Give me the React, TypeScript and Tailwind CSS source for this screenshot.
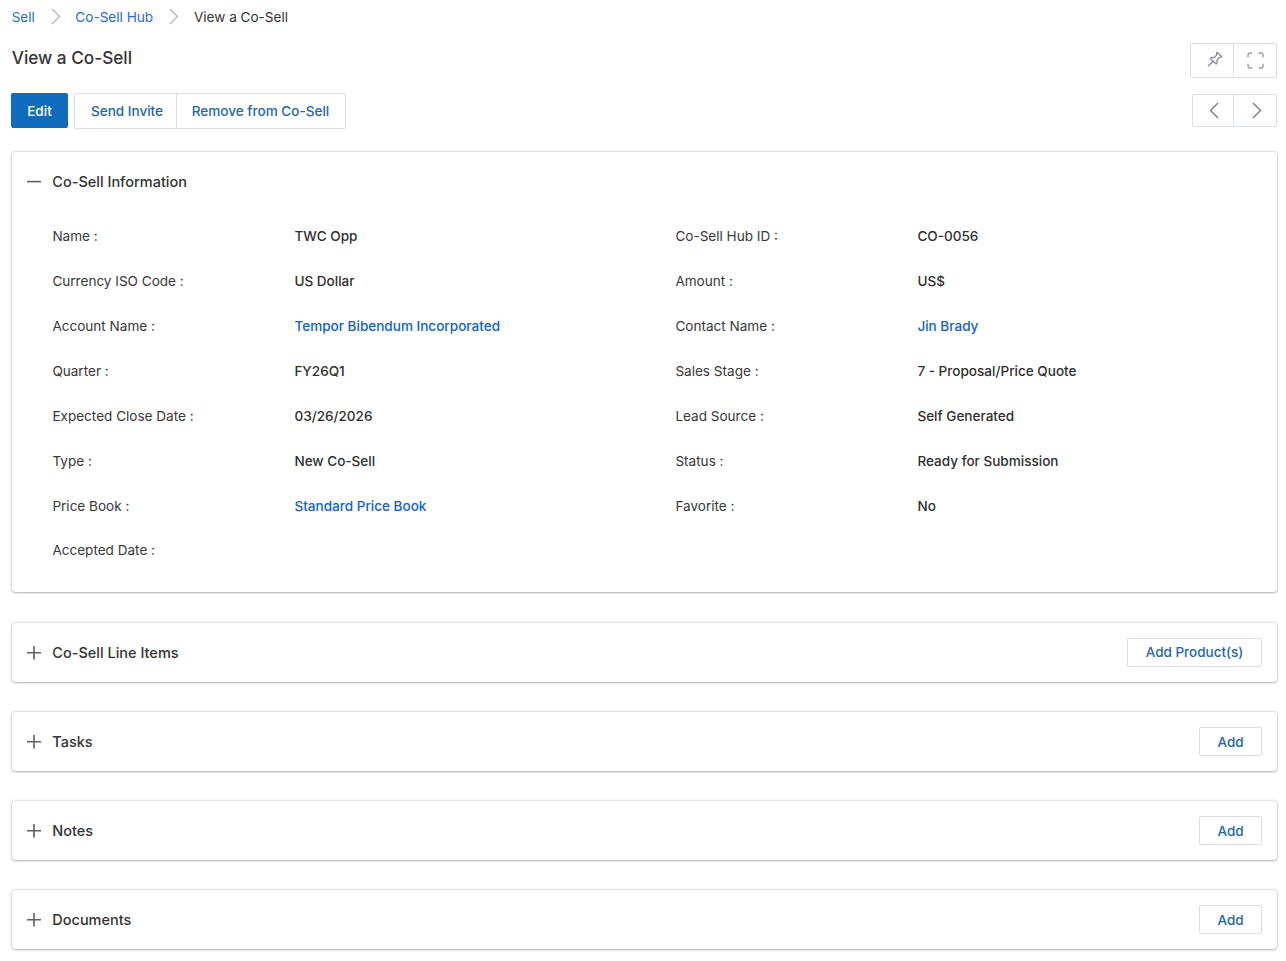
import React from "react";

type Field = { label: string; value: string; link?: boolean };

const left: Field[] = [
  { label: "Name", value: "TWC Opp" },
  { label: "Currency ISO Code", value: "US Dollar" },
  { label: "Account Name", value: "Tempor Bibendum Incorporated", link: true },
  { label: "Quarter", value: "FY26Q1" },
  { label: "Expected Close Date", value: "03/26/2026" },
  { label: "Type", value: "New Co-Sell" },
  { label: "Price Book", value: "Standard Price Book", link: true },
  { label: "Accepted Date", value: "" },
];

const right: Field[] = [
  { label: "Co-Sell Hub ID", value: "CO-0056" },
  { label: "Amount", value: "US$" },
  { label: "Contact Name", value: "Jin Brady", link: true },
  { label: "Sales Stage", value: "7 - Proposal/Price Quote" },
  { label: "Lead Source", value: "Self Generated" },
  { label: "Status", value: "Ready for Submission" },
  { label: "Favorite", value: "No" },
];

const rowHeights = ["h-[45px]", "h-[45px]", "h-[45px]", "h-[45px]", "h-[45px]", "h-[45px]", "h-[44px]", "h-[45px]"];

const sections = [
  { title: "Co-Sell Line Items", action: "Add Product(s)", margin: "mt-[31px]", button: "w-[135px] pb-[2px]" },
  { title: "Tasks", action: "Add", margin: "mt-[30px]", button: "w-[63px]" },
  { title: "Notes", action: "Add", margin: "mt-[30px]", button: "w-[63px]" },
  { title: "Documents", action: "Add", margin: "mt-[30px]", button: "w-[63px]" },
];

const card = "rounded-[4px] bg-white shadow-[0_0_2px_0.5px_rgba(0,0,0,0.13),0_1px_2px_0_rgba(40,40,80,0.24)]";

function Separator() {
  return (
    <svg width="10" height="17" viewBox="0 0 10 17" fill="none" stroke="#a9adb2" strokeWidth="1.1">
      <path d="M1 1l7.5 7.5L1 16" />
    </svg>
  );
}

function Toggle({ open }: { open?: boolean }) {
  return (
    <svg width="14" height="14" viewBox="0 0 14 14" fill="none" stroke="#606060" strokeWidth="1.6">
      <path d={open ? "M0 6.6h14" : "M0 6.8h14M7 0v13.6"} />
    </svg>
  );
}

function Fields({ items }: { items: Field[] }) {
  return (
    <dl className="w-[623px] shrink-0 text-[13.56px]">
      {items.map((f, i) => (
        <div key={f.label} className={`${rowHeights[i]} flex items-start pt-3`}>
          <dt className="w-[242px] text-[#383838]">{f.label} :</dt>
          <dd className={f.link ? "font-medium text-[#1160d4]" : "font-medium text-[#2e2e2e]"}>{f.value}</dd>
        </div>
      ))}
    </dl>
  );
}

export default function App() {
  return (
    <main className="h-[961px] overflow-hidden bg-white pr-[9px] pl-3 font-['Inter',sans-serif] text-[13.5px] leading-5 text-[#333]">
      <nav className="flex h-[33px] items-center">
        <a className="-ml-[0.3px] w-[39.3px] text-[#1f69dd]">Sell</a>
        <Separator />
        <a className="ml-[14.3px] w-[93.7px] text-[13.6px] text-[#1f69dd]">Co-Sell Hub</a>
        <Separator />
        <span className="ml-[15px] text-[13.56px]">View a Co-Sell</span>
      </nav>

      <header className="flex h-[60px] justify-between pt-[10px]">
        <h1 className="mt-[3px] -ml-[0.3px] text-[17.2px] leading-6 font-medium text-[#333]">View a Co-Sell</h1>
        <div className="-mt-[0.5px] flex h-[35px] w-[87px] rounded-[2px] border border-[#d8dfe9] text-[#7f858d]">
          <button className="flex w-[43px] items-center justify-center border-r border-[#d8dfe9] pb-[3px] pl-[6px]">
            <svg width="16" height="16" viewBox="0 0 16 16" fill="none" stroke="currentColor" strokeWidth="1.2" strokeLinejoin="round">
              <path d="M10 1.2L14.8 5.8l-1.7.7-.7-.1-2.5 2.7.2 2.9-1 1L3.3 7.4l1-1 3 .1 2.5-2.6-.4-1.4zM6.2 10.2L1 15" />
            </svg>
          </button>
          <button className="flex flex-1 items-center justify-center">
            <svg width="17" height="17" viewBox="0 0 17 17" fill="none" stroke="#999da3" strokeWidth="1.4">
              <path d="M1 5.3V3a2 2 0 0 1 2-2h2.3M11.7 1H14a2 2 0 0 1 2 2v2.3M16 11.7V14a2 2 0 0 1-2 2h-2.3M5.3 16H3a2 2 0 0 1-2-2v-2.3" />
            </svg>
          </button>
        </div>
      </header>

      <div className="flex h-[59px] text-[13.56px] font-medium text-[#1c66ad]">
        <button className="-ml-px h-[35px] w-[57px] rounded-[2px] bg-[#116bbc] text-white">Edit</button>
        <div className="ml-[6px] flex h-[36px] w-[272px] rounded-[2px] border border-[#d8dfe9]">
          <button className="w-[102px] border-r border-[#d8dfe9] pb-px pl-[3px]">Send Invite</button>
          <button className="flex-1 pr-[1px] pb-px">Remove from Co-Sell</button>
        </div>
        <div className="mt-[1px] ml-auto flex h-[33px] w-[85px] rounded-[2px] border border-[#d8dfe9]">
          <button className="flex w-[41px] items-center justify-center border-r border-[#d8dfe9] pl-[2px]">
            <svg width="10" height="17" viewBox="0 0 10 17" fill="none" stroke="#747b82" strokeWidth="1.4"><path d="M9 1L1.5 8.5 9 16" /></svg>
          </button>
          <button className="flex flex-1 items-center justify-center pl-[4px]">
            <svg width="10" height="17" viewBox="0 0 10 17" fill="none" stroke="#747b82" strokeWidth="1.4"><path d="M1 1l7.5 7.5L1 16" /></svg>
          </button>
        </div>
      </div>

      <section className={`${card} h-[440px] pt-[19px]`}>
        <div className="flex h-[22px] items-center pl-[15px]">
          <Toggle open />
          <h2 className="ml-[11.3px] text-[14.5px] font-medium text-[#333]">Co-Sell Information</h2>
        </div>
        <div className="mt-[21px] flex pl-[40.4px]">
          <Fields items={left} />
          <Fields items={right} />
        </div>
      </section>

      {sections.map((s) => (
        <section key={s.title} className={`${card} ${s.margin} flex h-[59px] items-center pr-[15px] pl-[15px]`}>
          <Toggle />
          <h2 className="ml-[11.3px] text-[14.5px] font-medium text-[#333]">{s.title}</h2>
          <button className={`${s.button} ml-auto h-[29px] rounded-[2px] border border-[#d8dfe9] font-medium text-[#1c66ad]`}>{s.action}</button>
        </section>
      ))}
    </main>
  );
}
